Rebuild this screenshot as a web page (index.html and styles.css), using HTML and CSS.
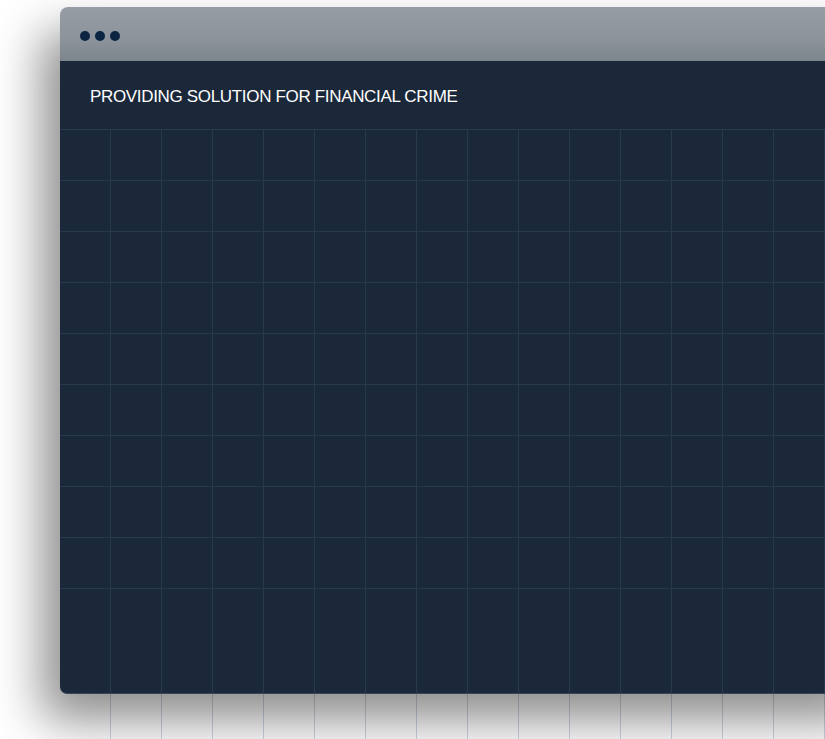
FILE: index.html
```html
<!DOCTYPE html>
<html lang="en">
<head>
<meta charset="utf-8">
<title>Providing solution for financial crime</title>
<link rel="stylesheet" href="styles.css">
</head>
<body>
<div class="stage">
  <div class="window">
    <div class="titlebar">
      <span class="dot"></span><span class="dot"></span><span class="dot"></span>
    </div>
    <div class="content">
      <div class="header">PROVIDING SOLUTION FOR FINANCIAL CRIME</div>
      <div class="grid"></div>
    </div>
  </div>
  <div class="columns"></div>
</div>
</body>
</html>
```
FILE: styles.css
```css
html, body {
  margin: 0;
  padding: 0;
  background: #ffffff;
  overflow: hidden;
}
.stage {
  width: 825px;
  height: 739px;
  padding-top: 7px;
  box-sizing: border-box;
  overflow: hidden;
}
.window {
  position: relative;
  z-index: 1;
  margin-left: 60px;
  width: 820px;
  height: 687px;
  display: flex;
  flex-direction: column;
  border-radius: 8px 0 0 8px;
  box-shadow: -18px 26px 48px rgba(0, 0, 0, 0.45);
}
.titlebar {
  height: 54px;
  flex: none;
  display: flex;
  align-items: center;
  gap: 5px;
  padding: 4px 0 0 20px;
  box-sizing: border-box;
  background: linear-gradient(to bottom, #969da5, #8c939b 60%, #7c848c);
  border-radius: 8px 0 0 0;
}
.dot {
  width: 10px;
  height: 10px;
  border-radius: 50%;
  background: #0b2442;
}
.content {
  flex: 1;
  display: flex;
  flex-direction: column;
  background: #1b283a;
  border-radius: 0 0 0 7px;
  border-bottom: 1px solid #34455a;
}
.header {
  height: 68px;
  flex: none;
  display: flex;
  align-items: center;
  padding: 3px 0 0 30px;
  box-sizing: border-box;
  font-family: "Liberation Sans", Arial, sans-serif;
  font-size: 17px;
  color: #ffffff;
  letter-spacing: -0.33px;
}
.grid {
  flex: 1;
  background-image:
    repeating-linear-gradient(to bottom, #26394e 0 1px, transparent 1px 51px),
    repeating-linear-gradient(to right, #26394e 0 1px, transparent 1px 51px);
  background-size: 100% 461px, 51px 100%;
  background-repeat: no-repeat, repeat-x;
  background-position: 0 0, 50px 0;
}
.columns {
  height: 60px;
  margin-left: 110px;
  background-image: repeating-linear-gradient(to right, #cfd7e2 0 1px, transparent 1px 51px);
}
```
